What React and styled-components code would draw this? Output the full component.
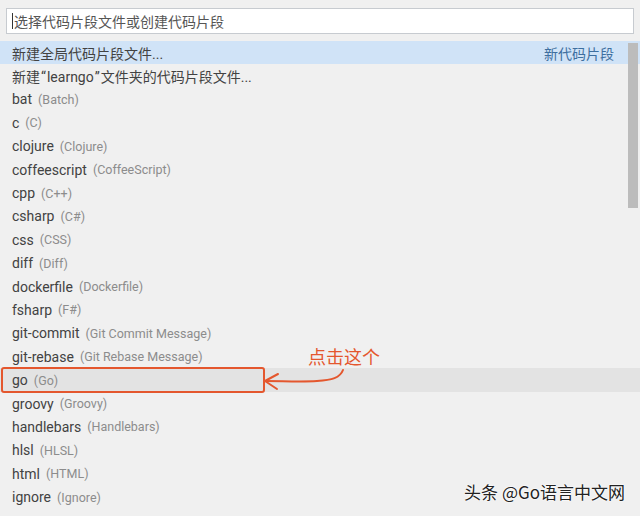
import React from 'react'
import styled, { createGlobalStyle } from 'styled-components'

const GlobalStyle = createGlobalStyle`
  html, body {
    margin: 0;
    padding: 0;
    background: #f0f0f0;
  }
`

const Page = styled.div`
  position: relative;
  width: 640px;
  height: 516px;
  overflow: hidden;
  background: #f0f0f0;
  font-family: Roboto, 'Noto Sans CJK SC', sans-serif;
`

const InputWrap = styled.div`
  padding: 8px 6px 7px 6px;
`

const Input = styled.div`
  display: flex;
  align-items: center;
  height: 24px;
  border: 1px solid #c7cbd0;
  background: #fff;
  padding-left: 5px;
  font-size: 14px;
  color: #555;
`

const Caret = styled.span`
  width: 1px;
  height: 16px;
  background: #333;
  margin-right: 1px;
`

const List = styled.div`
  position: relative;
`

const Row = styled.div`
  display: flex;
  align-items: center;
  height: 23.4px;
  padding: 0 26px 0 12px;
  background: ${p => (p.$tone === 'active' ? '#d0e3f7' : p.$tone === 'hover' ? '#e3e3e3' : 'transparent')};
`

const Label = styled.span`
  font-size: 14px;
  color: #424242;
  white-space: nowrap;
`

const Quote = styled.span`
  margin: 0 1px;
`

const Desc = styled.span`
  font-size: 12.5px;
  color: #8c8c8c;
  margin-left: 6px;
`

const Side = styled.span`
  margin-left: auto;
  font-size: 14px;
  color: #3e6f9f;
`

const Scrollbar = styled.div`
  position: absolute;
  right: 2px;
  top: 2px;
  width: 10px;
  height: 165px;
  background: #bcbcbc;
`

const Callout = styled.div`
  position: absolute;
  left: 1px;
  top: 367px;
  width: 260px;
  height: 22px;
  border: 2px solid #e4572e;
  border-radius: 3px;
`

const CalloutText = styled.div`
  position: absolute;
  left: 308px;
  top: 343px;
  font-size: 18px;
  color: #e4572e;
  font-family: 'Noto Sans CJK SC', sans-serif;
`

const Arrow = styled.svg`
  position: absolute;
  left: 262px;
  top: 366px;
`

const Watermark = styled.div`
  position: absolute;
  right: 15px;
  bottom: 12px;
  font-size: 17px;
  color: #222;
  font-family: 'Noto Sans CJK SC', sans-serif;
  text-shadow: 0 0 2px #fff, 0 0 2px #fff, 0 0 1px #fff;
`

const items = [
  ['bat', 'Batch'],
  ['c', 'C'],
  ['clojure', 'Clojure'],
  ['coffeescript', 'CoffeeScript'],
  ['cpp', 'C++'],
  ['csharp', 'C#'],
  ['css', 'CSS'],
  ['diff', 'Diff'],
  ['dockerfile', 'Dockerfile'],
  ['fsharp', 'F#'],
  ['git-commit', 'Git Commit Message'],
  ['git-rebase', 'Git Rebase Message'],
  ['go', 'Go'],
  ['groovy', 'Groovy'],
  ['handlebars', 'Handlebars'],
  ['hlsl', 'HLSL'],
  ['html', 'HTML'],
  ['ignore', 'Ignore'],
]

const App = () => {
  return (
    <Page>
      <GlobalStyle />
      <InputWrap>
        <Input>
          <Caret />
          选择代码片段文件或创建代码片段
        </Input>
      </InputWrap>
      <List>
        <Row $tone="active">
          <Label>新建全局代码片段文件...</Label>
          <Side>新代码片段</Side>
        </Row>
        <Row>
          <Label>
            新建<Quote>“</Quote>learngo<Quote>”</Quote>文件夹的代码片段文件...
          </Label>
        </Row>
        {items.map(([name, desc]) => (
          <Row key={name} $tone={name === 'go' ? 'hover' : undefined}>
            <Label>{name}</Label>
            <Desc>({desc})</Desc>
          </Row>
        ))}
        <Scrollbar />
      </List>
      <Callout />
      <CalloutText>点击这个</CalloutText>
      <Arrow width="90" height="30" viewBox="0 0 90 30">
        <path
          d="M81 4 C78 12 70 14 55 15 C40 16 20 15 3 15"
          fill="none"
          stroke="#e4572e"
          strokeWidth="2"
          strokeLinecap="round"
        />
        <path
          d="M16 8 L3 15 L15 23"
          fill="none"
          stroke="#e4572e"
          strokeWidth="2"
          strokeLinecap="round"
          strokeLinejoin="round"
        />
      </Arrow>
      <Watermark>头条 @Go语言中文网</Watermark>
    </Page>
  )
}

export default App
